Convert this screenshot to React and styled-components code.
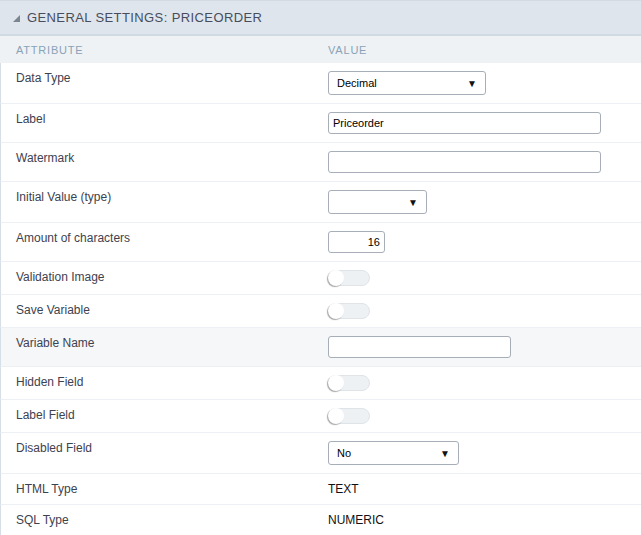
import React from "react";
import styled, { createGlobalStyle } from "styled-components";

const rows = [
  { label: "Data Type", kind: "select", value: "Decimal", width: 158 },
  { label: "Label", kind: "input", value: "Priceorder", width: 273 },
  { label: "Watermark", kind: "input", value: "", width: 273 },
  { label: "Initial Value (type)", kind: "select", value: "", width: 99 },
  { label: "Amount of characters", kind: "number", value: "16", width: 57 },
  { label: "Validation Image", kind: "toggle" },
  { label: "Save Variable", kind: "toggle" },
  { label: "Variable Name", kind: "input", value: "", width: 183, shaded: true },
  { label: "Hidden Field", kind: "toggle" },
  { label: "Label Field", kind: "toggle" },
  { label: "Disabled Field", kind: "select", value: "No", width: 131 },
  { label: "HTML Type", kind: "text", value: "TEXT" },
  { label: "SQL Type", kind: "text", value: "NUMERIC" },
];

const Value = ({ row }) => {
  if (row.kind === "select")
    return (
      <SelectBox style={{ width: row.width }}>
        <span>{row.value}</span>
        <Arrow>▼</Arrow>
      </SelectBox>
    );
  if (row.kind === "input" || row.kind === "number")
    return (
      <TextBox
        readOnly
        value={row.value}
        $right={row.kind === "number"}
        style={{ width: row.width }}
      />
    );
  if (row.kind === "toggle")
    return (
      <Toggle>
        <Knob />
      </Toggle>
    );
  return <PlainValue>{row.value}</PlainValue>;
};

const App = () => (
  <>
    <GlobalStyle />
    <Panel>
      <Title>
        <Corner />
        General Settings: Priceorder
      </Title>
      <HeadRow>
        <span>Attribute</span>
        <span>Value</span>
      </HeadRow>
      {rows.map((row) => (
        <Row key={row.label} $shaded={row.shaded}>
          <Label>{row.label}</Label>
          <Cell>
            <Value row={row} />
          </Cell>
        </Row>
      ))}
    </Panel>
  </>
);

const GlobalStyle = createGlobalStyle`
  body {
    margin: 0;
    background: #ffffff;
    font-family: "Liberation Sans", Arial, sans-serif;
  }
`;

const Panel = styled.div`
  width: 641px;
  height: 535px;
  overflow: hidden;
  background: #ffffff;
`;

const Title = styled.div`
  height: 33px;
  border-top: 1px solid #d3dbe2;
  border-bottom: 2px solid #d2dae1;
  background: #dfe5ec;
  display: flex;
  align-items: center;
  padding-left: 13px;
  gap: 7px;
  font-size: 13px;
  letter-spacing: 0.4px;
  text-transform: uppercase;
  color: #474d5c;
`;

const Corner = styled.span`
  width: 0;
  height: 0;
  border-left: 7px solid transparent;
  border-bottom: 7px solid #7d8590;
  margin-top: 2px;
`;

const HeadRow = styled.div`
  height: 27px;
  background: #eef2f5;
  display: grid;
  grid-template-columns: 312px 1fr;
  align-items: center;
  padding-left: 16px;
  font-size: 11px;
  letter-spacing: 0.8px;
  text-transform: uppercase;
  color: #89a2b7;
`;

const Row = styled.div`
  display: grid;
  grid-template-columns: 312px 1fr;
  padding: 8px 0 8px 15px;
  border-bottom: 1px solid #eceff3;
  border-left: 1px solid #d6dee6;
  background: ${(p) => (p.$shaded ? "#f5f7f9" : "#ffffff")};
`;

const Label = styled.div`
  font-size: 12px;
  line-height: 14px;
  color: #3d4250;
`;

const Cell = styled.div`
  display: flex;
  align-items: flex-start;
`;

const SelectBox = styled.div`
  height: 24px;
  box-sizing: border-box;
  border: 1px solid #a7aeb8;
  border-radius: 3px;
  background: #ffffff;
  display: flex;
  align-items: center;
  justify-content: space-between;
  padding: 0 8px 0 8px;
  font-size: 11px;
  color: #000000;
`;

const Arrow = styled.span`
  font-size: 10px;
  color: #111111;
`;

const TextBox = styled.input`
  height: 22px;
  box-sizing: border-box;
  border: 1px solid #a7aeb8;
  border-radius: 3px;
  background: #ffffff;
  padding: 0 4px;
  margin: 0;
  font-family: "Liberation Sans", Arial, sans-serif;
  font-size: 11px;
  color: #000000;
  text-align: ${(p) => (p.$right ? "right" : "left")};
  outline: none;
`;

const Toggle = styled.div`
  position: relative;
  width: 42px;
  height: 16px;
  box-sizing: border-box;
  border: 1px solid #dfe4e9;
  border-radius: 8px;
  background: #eef1f4;
`;

const Knob = styled.div`
  position: absolute;
  left: -1px;
  top: -1px;
  width: 16px;
  height: 16px;
  border-radius: 50%;
  background: #ffffff;
  box-shadow: -1px 1px 1px rgba(0, 0, 0, 0.35);
`;

const PlainValue = styled.div`
  font-size: 12px;
  line-height: 14px;
  color: #111111;
`;

export default App;
